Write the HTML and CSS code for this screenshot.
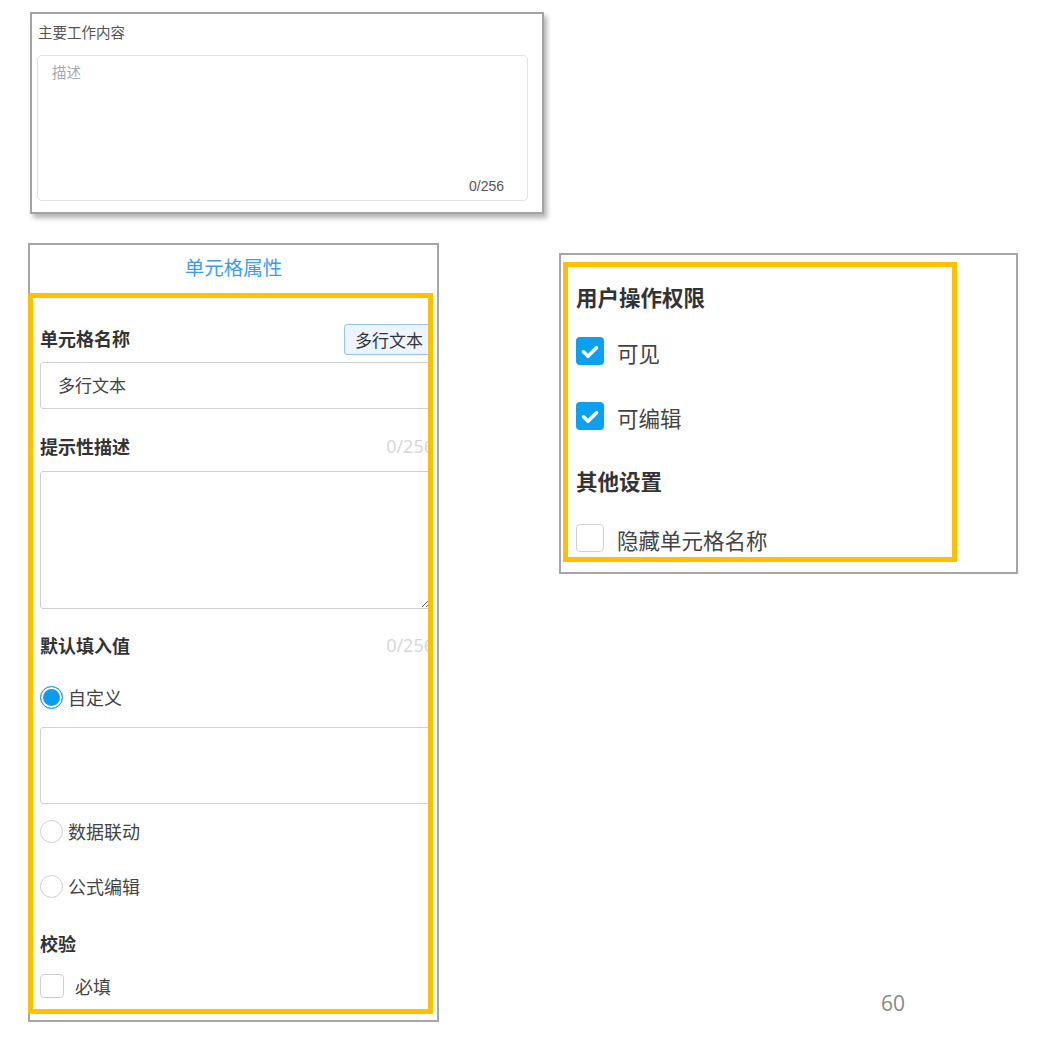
FILE: index.html
```html
<!DOCTYPE html>
<html lang="zh">
<head>
<meta charset="utf-8">
<title>单元格属性</title>
<link rel="stylesheet" href="styles.css">
</head>
<body>
<div class="page">
  <section class="work-card">
    <div class="work-title">主要工作内容</div>
    <div class="work-area">
      <span class="work-ph">描述</span>
      <span class="work-count">0/256</span>
    </div>
  </section>

  <div class="row">
    <section class="cell-panel">
      <header class="cell-head">单元格属性</header>
      <div class="hl hl-left">
        <div class="cell-body">
          <div class="field-row first">
            <span class="label">单元格名称</span>
            <span class="tag">多行文本</span>
          </div>
          <div class="input">多行文本</div>

          <div class="field-row desc">
            <span class="label">提示性描述</span>
            <span class="count">0/256</span>
          </div>
          <textarea class="ta"></textarea>

          <div class="field-row dflt">
            <span class="label">默认填入值</span>
            <span class="count">0/256</span>
          </div>
          <div class="opt opt1"><span class="radio on"></span><span>自定义</span></div>
          <div class="val"></div>
          <div class="opt opt2"><span class="radio"></span><span>数据联动</span></div>
          <div class="opt opt3"><span class="radio"></span><span>公式编辑</span></div>

          <div class="label check-title">校验</div>
          <div class="req"><span class="sq"></span><span class="req-text">必填</span></div>
        </div>
      </div>
    </section>

    <div class="side">
      <section class="perm-panel">
        <div class="hl hl-right">
          <div class="perm-body">
            <div class="perm-h h1">用户操作权限</div>
            <div class="chk-row r1">
              <span class="cbox on"><svg viewBox="0 0 28 28" width="28" height="28"><path d="M7.5 14.8 L12 19.3 L20.5 10.8" fill="none" stroke="#fff" stroke-width="3.6" stroke-linecap="round" stroke-linejoin="round"/></svg></span>
              <span class="chk-text">可见</span>
            </div>
            <div class="chk-row r2">
              <span class="cbox on"><svg viewBox="0 0 28 28" width="28" height="28"><path d="M7.5 14.8 L12 19.3 L20.5 10.8" fill="none" stroke="#fff" stroke-width="3.6" stroke-linecap="round" stroke-linejoin="round"/></svg></span>
              <span class="chk-text">可编辑</span>
            </div>
            <div class="perm-h h2">其他设置</div>
            <div class="chk-row r3">
              <span class="cbox"></span>
              <span class="chk-text">隐藏单元格名称</span>
            </div>
          </div>
        </div>
      </section>
      <div class="page-num">60</div>
    </div>
  </div>
</div>
</body>
</html>
```

FILE: styles.css
```css
* { box-sizing: border-box; }
html, body { margin: 0; background: #fff; }
body {
  font-family: "Noto Sans CJK SC", "Noto Sans", sans-serif;
  color: #333;
}
.page { padding-top: 12px; }

/* top card */
.work-card {
  margin-left: 30px;
  width: 514px;
  height: 202px;
  border: 2px solid #a3a3a3;
  box-shadow: 3px 4px 5px rgba(0, 0, 0, 0.3);
  padding: 8px 0 0 5px;
  background: #fff;
}
.work-title {
  font-size: 14.5px;
  line-height: 20px;
  color: #555;
  padding-left: 1px;
}
.work-area {
  margin-top: 13px;
  width: 491px;
  height: 146px;
  border: 1px solid #e2e2e2;
  border-radius: 5px;
  padding: 6px 23px 4px 14px;
  display: flex;
  flex-direction: column;
  justify-content: space-between;
}
.work-ph { font-size: 14.5px; line-height: 20px; color: #aaa; }
.work-count {
  align-self: flex-end;
  font-family: "Liberation Sans", Arial, sans-serif;
  font-size: 14px;
  line-height: 20px;
  color: #555;
}

/* row */
.row {
  display: flex;
  align-items: flex-start;
  margin-top: 29px;
  padding-left: 28px;
}

/* left panel */
.cell-panel {
  flex: none;
  width: 411px;
  border: 2px solid #a6a6a6;
  padding-bottom: 6px;
}
.cell-head {
  height: 52px;
  line-height: 44px;
  text-align: center;
  border-bottom: 1px solid #ececec;
  font-size: 19.5px;
  color: #3d9cf2;
}
.hl {
  border: 5px solid #ffc000;
  overflow: hidden;
  background: #fff;
}
.hl-left {
  margin: -4px 0 0 -2px;
  width: 405px;
  height: 721px;
}
.cell-body {
  width: 401px;
  padding-left: 7px;
}
.field-row {
  display: flex;
  justify-content: space-between;
  align-items: center;
}
.field-row .label,
.field-row .count { margin-bottom: 4px; }
.first { margin-top: 26px; height: 31px; }
.label {
  font-size: 18px;
  font-weight: 700;
  line-height: 24px;
  color: #333;
}
.first .tag { margin-bottom: 0; }
.tag {
  height: 31px;
  line-height: 29px;
  padding: 0 10px;
  border: 1px solid #96c4ec;
  background: #ecf5ff;
  border-radius: 3px;
  font-size: 17px;
  color: #333;
}
.input {
  margin-top: 7px;
  width: 392px;
  height: 47px;
  border: 1px solid #d2d2d2;
  border-radius: 3px;
  padding-left: 17px;
  font-size: 17px;
  line-height: 44px;
  color: #444;
}
.desc { margin-top: 27px; height: 24px; }
.count {
  font-family: "Open Sans", sans-serif;
  font-size: 18px;
  line-height: 24px;
  color: #d6d6d6;
}
.ta {
  display: block;
  margin: 11px 0 0;
  width: 391px;
  height: 138px;
  border: 1px solid #cfcfcf;
  border-radius: 3px;
  resize: vertical;
  padding: 0;
  font: inherit;
  background: #fff;
}
.dflt { margin-top: 26px; height: 24px; }
.opt {
  display: flex;
  align-items: center;
  height: 24px;
  font-size: 18px;
  line-height: 24px;
  color: #444;
}
.radio {
  flex: none;
  width: 23px;
  height: 23px;
  border-radius: 50%;
  border: 1px solid #cfcfcf;
  margin-right: 5px;
  background: #fff;
}
.radio.on {
  border-color: #22a0f0;
  background: #0a9cf0;
  box-shadow: inset 0 0 0 2px #fff;
}
.opt1 { margin-top: 26px; }
.val {
  margin-top: 18px;
  width: 391px;
  height: 77px;
  border: 1px solid #d2d2d2;
  border-radius: 3px;
}
.opt2 { margin-top: 15px; }
.opt3 { margin-top: 31px; }
.check-title { margin-top: 33px; }
.req {
  margin-top: 19px;
  display: flex;
  align-items: center;
  height: 24px;
  font-size: 18px;
  color: #444;
}
.sq {
  flex: none;
  width: 24px;
  height: 24px;
  border: 1px solid #cfcfcf;
  border-radius: 4px;
}
.req-text { margin-left: 11px; line-height: 24px; }

/* right side */
.side {
  flex: none;
  margin: 10px 0 0 120px;
  display: flex;
  flex-direction: column;
}
.perm-panel {
  width: 459px;
  height: 321px;
  border: 2px solid #a6a6a6;
  padding: 7px 0 0 2px;
}
.hl-right { width: 394px; height: 300px; }
.perm-body { padding-left: 8px; }
.perm-h {
  font-size: 21.5px;
  font-weight: 700;
  line-height: 30px;
  color: #333;
}
.h1 { margin-top: 15px; }
.h2 { margin-top: 36px; }
.chk-row {
  display: flex;
  align-items: center;
  height: 28px;
}
.r1 { margin-top: 25px; }
.r2 { margin-top: 37px; }
.r3 { margin-top: 28px; }
.cbox {
  flex: none;
  width: 28px;
  height: 28px;
  border-radius: 4px;
  border: 1px solid #cfcfcf;
  background: #fff;
  display: flex;
}
.cbox.on { border: none; background: #0ea0f0; }
.chk-text {
  margin-left: 13px;
  font-size: 21.5px;
  line-height: 24px;
  padding-top: 4px;
  color: #444;
}
.page-num {
  margin: 415px 0 0 322px;
  font-family: "Open Sans", sans-serif;
  font-size: 21px;
  line-height: 28px;
  color: #888;
}
```
